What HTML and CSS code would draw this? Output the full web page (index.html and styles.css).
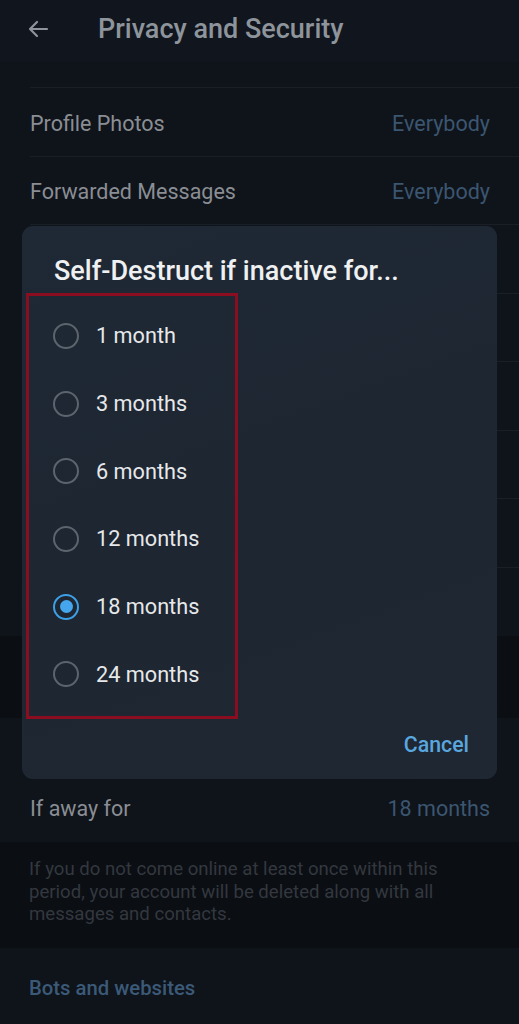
FILE: index.html
```html
<!DOCTYPE html>
<html>
<head>
<meta charset="utf-8">
<link rel="stylesheet" href="styles.css">
</head>
<body>
<div class="screen">
  <header class="topbar">
    <svg class="back" width="24" height="24" viewBox="0 0 24 24"><path d="M21 12H4M11 5l-7 7 7 7" fill="none" stroke="#8e949b" stroke-width="2.2" stroke-linecap="round" stroke-linejoin="round"/></svg>
    <h1 class="title">Privacy and Security</h1>
  </header>
  <div class="list">
    <div class="row row-cut"></div>
    <div class="row"><span class="label">Profile Photos</span><span class="value">Everybody</span></div>
    <div class="row"><span class="label">Forwarded Messages</span><span class="value">Everybody</span></div>
    <div class="row"></div>
    <div class="row"></div>
    <div class="row"></div>
    <div class="row"></div>
    <div class="row"></div>
    <div class="row row-last"></div>
  </div>
  <div class="gap"></div>
  <div class="section">
    <div class="section-head"></div>
    <div class="row row-single"><span class="label">If away for</span><span class="value">18 months</span></div>
  </div>
  <p class="info">If you do not come online at least once within this period, your account will be deleted along with all messages and contacts.</p>
  <div class="section">
    <div class="section-head bots">Bots and websites</div>
  </div>

  <div class="dialog">
    <h2 class="dialog-title">Self-Destruct if inactive for...</h2>
    <ul class="options">
      <li class="option"><span class="radio"></span><span>1 month</span></li>
      <li class="option"><span class="radio"></span><span>3 months</span></li>
      <li class="option"><span class="radio"></span><span>6 months</span></li>
      <li class="option"><span class="radio"></span><span>12 months</span></li>
      <li class="option"><span class="radio checked"></span><span>18 months</span></li>
      <li class="option"><span class="radio"></span><span>24 months</span></li>
    </ul>
    <div class="actions"><span class="cancel">Cancel</span></div>
    <div class="highlight"></div>
  </div>
</div>
</body>
</html>
```

FILE: styles.css
```css
* { box-sizing: border-box; margin: 0; padding: 0; }
html, body { background: #0e1219; }
body {
  font-family: Roboto, "Noto Sans", sans-serif;
  width: 519px;
  height: 1024px;
  overflow: hidden;
}
.screen {
  position: relative;
  width: 519px;
  height: 1024px;
  background: #0e1219;
}
.topbar {
  height: 62px;
  background: #11151d;
  display: flex;
  align-items: center;
  padding-left: 26px;
  gap: 48px;
  padding-bottom: 4px;
}
.back { flex: none; }
.title {
  font-size: 27px;
  font-weight: 500;
  color: #8e949b;
}
.list { background: #0f131a; }
.row {
  height: 68.5px;
  margin-left: 30px;
  padding-right: 29px;
  padding-top: 3px;
  display: flex;
  align-items: center;
  justify-content: space-between;
  border-bottom: 1px solid #1a1f27;
  font-size: 21.5px;
}
.row-cut { height: 26px; }
.row-last { border-bottom: none; }
.row-single { border-bottom: none; height: 67px; padding-top: 0; }
.label { color: #8a8e94; }
.value { color: #3b5670; }
.gap { height: 82px; background: #0b0e13; }
.section { background: #0f131a; }
.section-head {
  height: 57px;
  padding-left: 29px;
  display: flex;
  align-items: center;
  color: #3b5a78;
  font-size: 20.3px;
  font-weight: 500;
}
.info {
  background: #0b0e13;
  padding: 16px 56px 22px 29px;
  font-size: 18.6px;
  line-height: 22.5px;
  color: #33383f;
}
.bots { height: 80px; }

.dialog {
  position: absolute;
  left: 22px;
  top: 226px;
  width: 475px;
  height: 553px;
  border-radius: 11px;
  background: linear-gradient(160deg, #1f2935 0%, #1d2631 50%, #1e2732 100%);
  padding-top: 30px;
}
.dialog-title {
  padding-left: 32px;
  font-size: 27px;
  line-height: 30px;
  font-weight: 500;
  color: #eef0f2;
}
.options {
  list-style: none;
  margin-top: 16px;
}
.option {
  height: 67.7px;
  display: flex;
  align-items: center;
  padding-left: 31px;
  gap: 17px;
  font-size: 21.7px;
  color: #e6e8ea;
}
.radio {
  width: 26px;
  height: 26px;
  border-radius: 50%;
  border: 2px solid #5c646d;
  flex: none;
  display: flex;
  align-items: center;
  justify-content: center;
}
.radio.checked { border: 2.5px solid #3d9fe6; }
.radio.checked::after {
  content: "";
  width: 13px;
  height: 13px;
  border-radius: 50%;
  background: #45a6ee;
}
.actions {
  margin-top: 25px;
  display: flex;
  justify-content: flex-end;
  padding-right: 28px;
}
.cancel {
  font-size: 21.3px;
  line-height: 24px;
  font-weight: 500;
  color: #5aa6de;
}
.highlight {
  position: absolute;
  left: 4px;
  top: 67px;
  width: 212px;
  height: 426px;
  border: 3px solid #8a0e1f;
}
```
